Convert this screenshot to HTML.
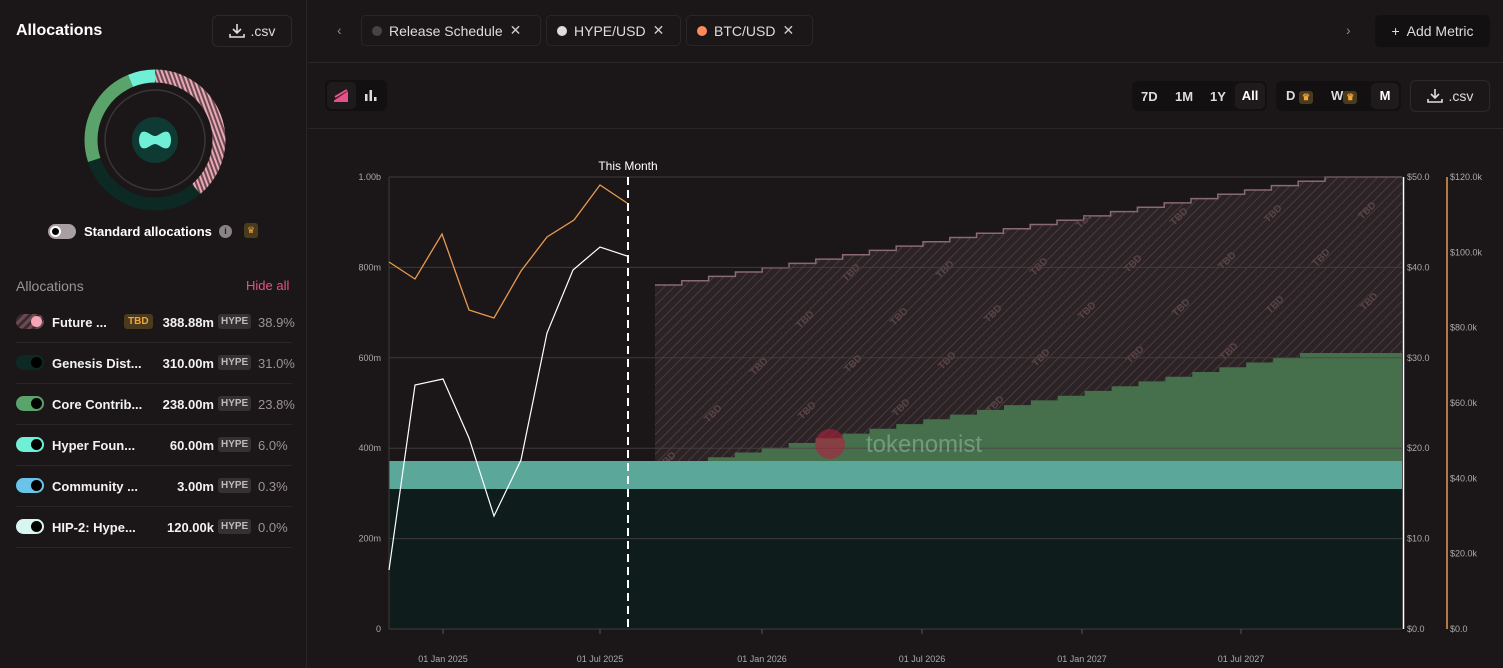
<!DOCTYPE html>
<html><head><meta charset="utf-8"><style>
*{box-sizing:border-box;margin:0;padding:0}
body{width:1503px;height:668px;background:#1b1718;font-family:"Liberation Sans",sans-serif;color:#eee;position:relative;overflow:hidden}
.abs{position:absolute}
.left{left:0;top:0;width:307px;height:668px;background:#1b1718;border-right:1px solid #2a2526}
.btn{border:1px solid #2e2929;border-radius:6px;background:#1b1718;display:flex;align-items:center;justify-content:center;font-size:14px;color:#ddd}
.row{position:absolute;left:16px;width:276px;height:41px;border-bottom:1px solid #2a2526;font-size:13px;font-weight:bold}
.row .tg{position:absolute;left:0;top:12px;width:28px;height:15px;border-radius:8px}
.row .tg i{position:absolute;right:2px;top:2px;width:11px;height:11px;border-radius:50%;background:#000}
.row .nm{position:absolute;left:36px;top:13px;color:#f2f2f2}
.row .v{position:absolute;right:78px;top:13px;color:#f2f2f2}
.row .hp{position:absolute;left:202px;top:12px;background:#353031;color:#bbb;font-size:10px;padding:2px 3px;border-radius:3px}
.row .pc{position:absolute;left:242px;top:13px;color:#9a9394;font-weight:normal}
.tab{position:absolute;top:15px;height:31px;border:1px solid #2a2526;border-radius:5px;display:flex;align-items:center;padding:0 10px;font-size:14px;color:#ddd;gap:7px}
.dot{width:10px;height:10px;border-radius:50%}
.seg{position:absolute;top:81px;height:30px;background:#131011;border-radius:6px;display:flex;align-items:center;font-size:13px;font-weight:bold;color:#ddd}
.crown{display:inline-block;width:14px;height:13px;background:#4a3a1e;border-radius:3px;color:#f0a63a;font-size:9px;text-align:center;line-height:13px}
.ax{font-size:9px;fill:#aaa;font-family:"Liberation Sans",sans-serif}
</style></head><body>
<div class="abs left">
 <div class="abs" style="left:16px;top:22px;font-size:16px;font-weight:bold;color:#fff">Allocations</div>
 <div class="abs btn" style="left:212px;top:15px;width:80px;height:32px"><svg width="16" height="16" viewBox="0 0 16 16" style="margin-right:6px"><path d="M8 1v9M4 6l4 4 4-4M1 11v3h14v-3" stroke="#ddd" stroke-width="1.6" fill="none"/></svg>.csv</div>
 <svg class="abs" style="left:80px;top:66px" width="150" height="150" viewBox="0 0 150 150">
  <defs><pattern id="ph" width="4" height="4" patternUnits="userSpaceOnUse" patternTransform="rotate(-20)"><rect width="4" height="4" fill="#6b4a52"/><rect width="4" height="2" fill="#e8a9b6"/></pattern></defs>
  <g transform="rotate(-90 75 74)">
  <circle cx="75" cy="74" r="64" fill="none" stroke="url(#ph)" stroke-width="13" stroke-dasharray="156.4 400" />
  <circle cx="75" cy="74" r="64" fill="none" stroke="#0c2a23" stroke-width="13" stroke-dasharray="0 156.4 124.7 400" />
  <circle cx="75" cy="74" r="64" fill="none" stroke="#5aa36a" stroke-width="13" stroke-dasharray="0 281.1 95.7 400" />
  <circle cx="75" cy="74" r="64" fill="none" stroke="#6ff0d6" stroke-width="13" stroke-dasharray="0 376.8 25.3 400" />
  </g>
  <circle cx="75" cy="74" r="50" fill="none" stroke="#3a3536" stroke-width="1.5"/>
  <circle cx="75" cy="74" r="23" fill="#0f3a33"/>
  <path d="M62 66c5-2 9 4 13 4s8-6 13-4c4 3 4 13 0 16c-5 2-9-4-13-4s-8 6-13 4c-4-3-4-13 0-16z" fill="#6ff0d6"/>
 </svg>
 <div class="abs" style="left:48px;top:224px;width:28px;height:15px;border-radius:8px;background:#a89fa2"><i style="position:absolute;left:2px;top:2px;width:11px;height:11px;border-radius:50%;background:#000;border:2px solid #fff"></i></div>
 <div class="abs" style="left:84px;top:224px;font-size:13px;font-weight:bold;color:#fff">Standard allocations</div>
 <div class="abs" style="left:219px;top:225px;width:13px;height:13px;border-radius:50%;background:#8a8385;color:#222;font-size:9px;text-align:center;line-height:13px;font-weight:bold">i</div>
 <div class="abs crown" style="left:244px;top:223px;height:15px;line-height:15px">♛</div>
 <div class="abs" style="left:16px;top:278px;font-size:14px;color:#9a9394">Allocations</div>
 <div class="abs" style="left:246px;top:278px;font-size:13px;color:#e8508a">Hide all</div>
 <div class="row" style="top:302px"><div class="tg" style="background:repeating-linear-gradient(135deg,#6b4a52 0 3px,#3a2a2f 3px 6px)"><i style="background:#f5a5b5"></i></div><div class="nm">Future ...</div><div style="position:absolute;left:108px;top:12px;background:#4a3a1e;color:#f0a63a;font-size:10px;padding:2px 4px;border-radius:3px">TBD</div><div class="v">388.88m</div><div class="hp">HYPE</div><div class="pc">38.9%</div></div>
 <div class="row" style="top:343px"><div class="tg" style="background:#0c2a23"><i></i></div><div class="nm">Genesis Dist...</div><div class="v">310.00m</div><div class="hp">HYPE</div><div class="pc">31.0%</div></div>
 <div class="row" style="top:384px"><div class="tg" style="background:#5aa36a"><i></i></div><div class="nm">Core Contrib...</div><div class="v">238.00m</div><div class="hp">HYPE</div><div class="pc">23.8%</div></div>
 <div class="row" style="top:425px"><div class="tg" style="background:#6ff0d6"><i></i></div><div class="nm">Hyper Foun...</div><div class="v">60.00m</div><div class="hp">HYPE</div><div class="pc">6.0%</div></div>
 <div class="row" style="top:466px"><div class="tg" style="background:#6ac4ea"><i></i></div><div class="nm">Community ...</div><div class="v">3.00m</div><div class="hp">HYPE</div><div class="pc">0.3%</div></div>
 <div class="row" style="top:507px"><div class="tg" style="background:#d8f5f0"><i></i></div><div class="nm">HIP-2: Hype...</div><div class="v">120.00k</div><div class="hp">HYPE</div><div class="pc">0.0%</div></div>
</div>
<div class="abs" style="left:308px;top:62px;width:1195px;height:1px;background:#2a2526"></div>
<div class="abs" style="left:308px;top:128px;width:1195px;height:1px;background:#2a2526"></div>
<div class="abs" style="left:337px;top:22px;color:#888;font-size:14px">‹</div>
<div class="tab" style="left:361px;width:180px"><span class="dot" style="background:#444"></span>Release Schedule <span style="color:#ccc">✕</span></div>
<div class="tab" style="left:546px;width:135px"><span class="dot" style="background:#ddd"></span>HYPE/USD <span style="color:#ccc">✕</span></div>
<div class="tab" style="left:686px;width:127px"><span class="dot" style="background:#ff8a5c"></span>BTC/USD <span style="color:#ccc">✕</span></div>
<div class="abs" style="left:1346px;top:22px;color:#888;font-size:14px">›</div>
<div class="abs" style="left:1375px;top:15px;width:115px;height:32px;background:#131011;border-radius:5px;font-size:14px;color:#ddd;display:flex;align-items:center;justify-content:center">+&nbsp; Add Metric</div>
<div class="abs" style="left:325px;top:80px;width:62px;height:31px;background:#131011;border-radius:6px"></div>
<div class="abs" style="left:327px;top:82px;width:29px;height:27px;background:#1f1b1c;border-radius:5px"></div>
<svg class="abs" style="left:334px;top:89px" width="14" height="13"><path d="M1 12L13 4V12Z M1 8L13 1" stroke="#e8508a" stroke-width="2" fill="#e8508a"/></svg>
<svg class="abs" style="left:364px;top:89px" width="14" height="13"><rect x="1" y="5" width="2.5" height="7" fill="#ddd"/><rect x="5.5" y="1" width="2.5" height="11" fill="#ddd"/><rect x="10" y="8" width="2.5" height="4" fill="#ddd"/></svg>
<div class="seg" style="left:1132px;width:135px"><span style="position:absolute;left:9px">7D</span><span style="position:absolute;left:43px">1M</span><span style="position:absolute;left:78px">1Y</span><span style="position:absolute;left:103px;top:2px;width:30px;height:26px;background:#1f1b1c;border-radius:5px;text-align:center;line-height:26px;color:#fff">All</span></div>
<div class="seg" style="left:1276px;width:125px"><span style="position:absolute;left:10px">D <span class="crown">♛</span></span><span style="position:absolute;left:55px">W<span class="crown">♛</span></span><span style="position:absolute;left:95px;top:2px;width:28px;height:26px;background:#1f1b1c;border-radius:5px;text-align:center;line-height:26px;color:#fff">M</span></div>
<div class="abs btn" style="left:1410px;top:80px;width:80px;height:32px"><svg width="16" height="16" viewBox="0 0 16 16" style="margin-right:6px"><path d="M8 1v9M4 6l4 4 4-4M1 11v3h14v-3" stroke="#ddd" stroke-width="1.6" fill="none"/></svg>.csv</div>
<svg id="ch" class="abs" style="left:0;top:0" width="1503" height="668"></svg>
<script>
(function(){
var s='';
var X0=389,X1=1402,Y0=629,H=452;
function y(v){return Y0-v*H;}
s+='<defs><pattern id="hp" width="7" height="7" patternUnits="userSpaceOnUse" patternTransform="rotate(45)"><rect width="7" height="7" fill="#2b2325"/><rect width="1" height="7" fill="#4a3b3e"/></pattern>';
var fx=655,fy=285,steps=25,dx=(1325-655)/steps,dy=(285-177)/steps;
var tp='M'+fx+' '+fy,xx=fx,yy=fy;
for(var i=0;i<steps;i++){xx+=dx;tp+=' H'+xx.toFixed(1);yy-=dy;tp+=' V'+yy.toFixed(1);}
tp+=' H'+X1;
var area=tp+' V462 H'+fx+'Z';
s+='<clipPath id="fc"><path d="'+area+'"/></clipPath></defs>';
s+='<path d="'+area+'" fill="url(#hp)"/>';
s+='<path d="'+tp+'" stroke="#8a6a72" stroke-width="1.5" fill="none"/>';
s+='<g clip-path="url(#fc)">';
for(var r=-3;r<8;r++)for(var c=0;c<12;c++){var px=662+c*140+r*46,py=470-r*47-c*50;
 if(px<650||px>1400||py<170||py>475)continue;
 s+='<text x="'+px+'" y="'+py+'" transform="rotate(-45 '+px+' '+py+')" font-size="10" fill="#5a4448" font-weight="bold" font-family="Liberation Sans">TBD</text>';}
s+='</g>';
var gx=681,gy=462,gs=23,gdx=(1300-681)/gs,gdy=(462-353)/gs;
var g='M'+gx+' 462',xg=gx,yg=gy;
for(var i=0;i<gs;i++){xg+=gdx;g+=' H'+xg.toFixed(1);yg-=gdy;g+=' V'+yg.toFixed(1);}
g+=' H'+X1+' V462Z';
s+='<path d="'+g+'" fill="#46704c"/>';
s+='<rect x="389" y="461" width="1013" height="28" fill="#5ba89a"/>';
s+='<rect x="389" y="489" width="1013" height="140" fill="#0e1c1c"/>';
var labs=['0','200m','400m','600m','800m','1.00b'];
for(var i=0;i<6;i++){var yy2=y(i*0.2);s+='<line x1="389" x2="1402" y1="'+yy2+'" y2="'+yy2+'" stroke="#4a4243" stroke-width="1" opacity=".8"/>';
 s+='<text class="ax" x="381" y="'+(yy2+3)+'" text-anchor="end">'+labs[i]+'</text>';
 s+='<text class="ax" x="1407" y="'+(yy2+3)+'">$'+(i*10)+'.0</text>';}
for(var i=0;i<7;i++){var yy3=Y0-i*H/6;s+='<text class="ax" x="1450" y="'+(yy3+3)+'">$'+(i==0?'0.0':(i*20)+'.0k')+'</text>';}
s+='<line x1="389" x2="389" y1="177" y2="629" stroke="#3e3839"/>';
s+='<line x1="1403.5" x2="1403.5" y1="177" y2="629" stroke="#fff" stroke-width="1.5"/>';
s+='<line x1="1447" x2="1447" y1="177" y2="629" stroke="#e89a50" stroke-width="1.5"/>';
var dl=[[443,'01 Jan 2025'],[600,'01 Jul 2025'],[762,'01 Jan 2026'],[922,'01 Jul 2026'],[1082,'01 Jan 2027'],[1241,'01 Jul 2027']];
dl.forEach(function(d){s+='<line x1="'+d[0]+'" x2="'+d[0]+'" y1="629" y2="634" stroke="#555"/><text class="ax" x="'+d[0]+'" y="662" text-anchor="middle">'+d[1]+'</text>';});
s+='<circle cx="830" cy="444" r="15" fill="#b0203f" opacity=".6"/><text x="866" y="452" font-size="24" fill="#7aa886" opacity=".8" font-family="Liberation Sans">tokenomist</text>';
s+='<polyline points="389,262 415,279 442,234 469,310 494,318 521,271 547,237 574,220 600,185 627,203" fill="none" stroke="#e89a50" stroke-width="1.3"/>';
s+='<polyline points="389,570 415,385 443,379 469,438 494,516 521,460 547,333 573,270 600,247 627,256" fill="none" stroke="#fff" stroke-width="1.2"/>';
s+='<line x1="628" x2="628" y1="177" y2="629" stroke="#fff" stroke-width="2" stroke-dasharray="8 5"/>';
s+='<text x="628" y="170" font-size="12" fill="#fff" text-anchor="middle" font-family="Liberation Sans">This Month</text>';
document.getElementById('ch').innerHTML=s;
})();
</script>
</body></html>
